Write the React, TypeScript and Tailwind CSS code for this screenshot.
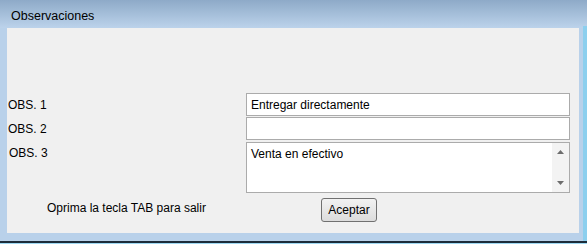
const font = "font-['Liberation_Sans',Arial,sans-serif]";

function ObsRow({ label, value }: { label: string; value: string }) {
  return (
    <div className="flex h-[23px] items-center">
      <span className="w-[239px] pl-[1px] text-[12px] text-black">{label}</span>
      <div className="flex h-[23px] w-[324px] items-center border border-[#ababab] bg-white px-[4px] text-[12px] text-black">
        {value}
      </div>
    </div>
  );
}

function Arrow({ up }: { up?: boolean }) {
  return (
    <svg width="7" height="4" viewBox="0 0 7 4" className="text-[#6d6d6d]">
      <polygon points={up ? "0,4 3.5,0 7,4" : "0,0 7,0 3.5,4"} fill="currentColor" />
    </svg>
  );
}

export default function App() {
  return (
    <div className={`relative h-[244px] w-[587px] overflow-hidden bg-[#b9d1ea] ${font}`}>
      {/* Barra de título */}
      <div className="flex h-[28px] items-center bg-gradient-to-b from-[#8eaac8] to-[#bcd3eb] pl-[11px] pt-[5px] text-[12.5px] text-black">
        Observaciones
      </div>

      {/* Contenido */}
      <div className="ml-[7px] mr-[8px] flex h-[205px] flex-col bg-[#f0f0f0] pt-[65px]">
        <ObsRow label="OBS. 1" value="Entregar directamente" />
        <div className="h-[1px]" />
        <ObsRow label="OBS. 2" value="" />
        <div className="h-[2px]" />
        <div className="flex">
          <span className="w-[239px] pl-[2px] pt-[2px] text-[12px] text-black">OBS. 3</span>
          <div className="flex h-[51px] w-[324px] border border-[#ababab] bg-white">
            <div className="flex-1 px-[4px] pt-[2px] text-[12px] text-black">Venta en efectivo</div>
            <div className="flex w-[17px] flex-col items-center justify-between bg-[#f3f3f3] pb-[7px] pt-[7px]">
              <Arrow up />
              <Arrow />
            </div>
          </div>
        </div>
        <div className="mt-[5px] flex items-start">
          <span className="ml-[40px] mt-[1px] w-[274px] text-[12px] text-black">Oprima la tecla TAB para salir</span>
          <button className="h-[24px] w-[56px] rounded-[3px] border border-[#707070] bg-gradient-to-b from-[#f2f2f2] to-[#dcdcdc] text-[12px] text-black">
            Aceptar
          </button>
        </div>
      </div>

      {/* Borde inferior */}
      <div className="h-[8px]" />
      <div className="h-[2px] bg-[#1c2c3a]" />
      <div className="h-[1px] bg-[#9fd8f2]" />

      {/* Borde derecho */}
      <div className="absolute right-0 top-[26px] h-[215px] w-[4px] bg-[#8ccfee]" />
    </div>
  );
}
